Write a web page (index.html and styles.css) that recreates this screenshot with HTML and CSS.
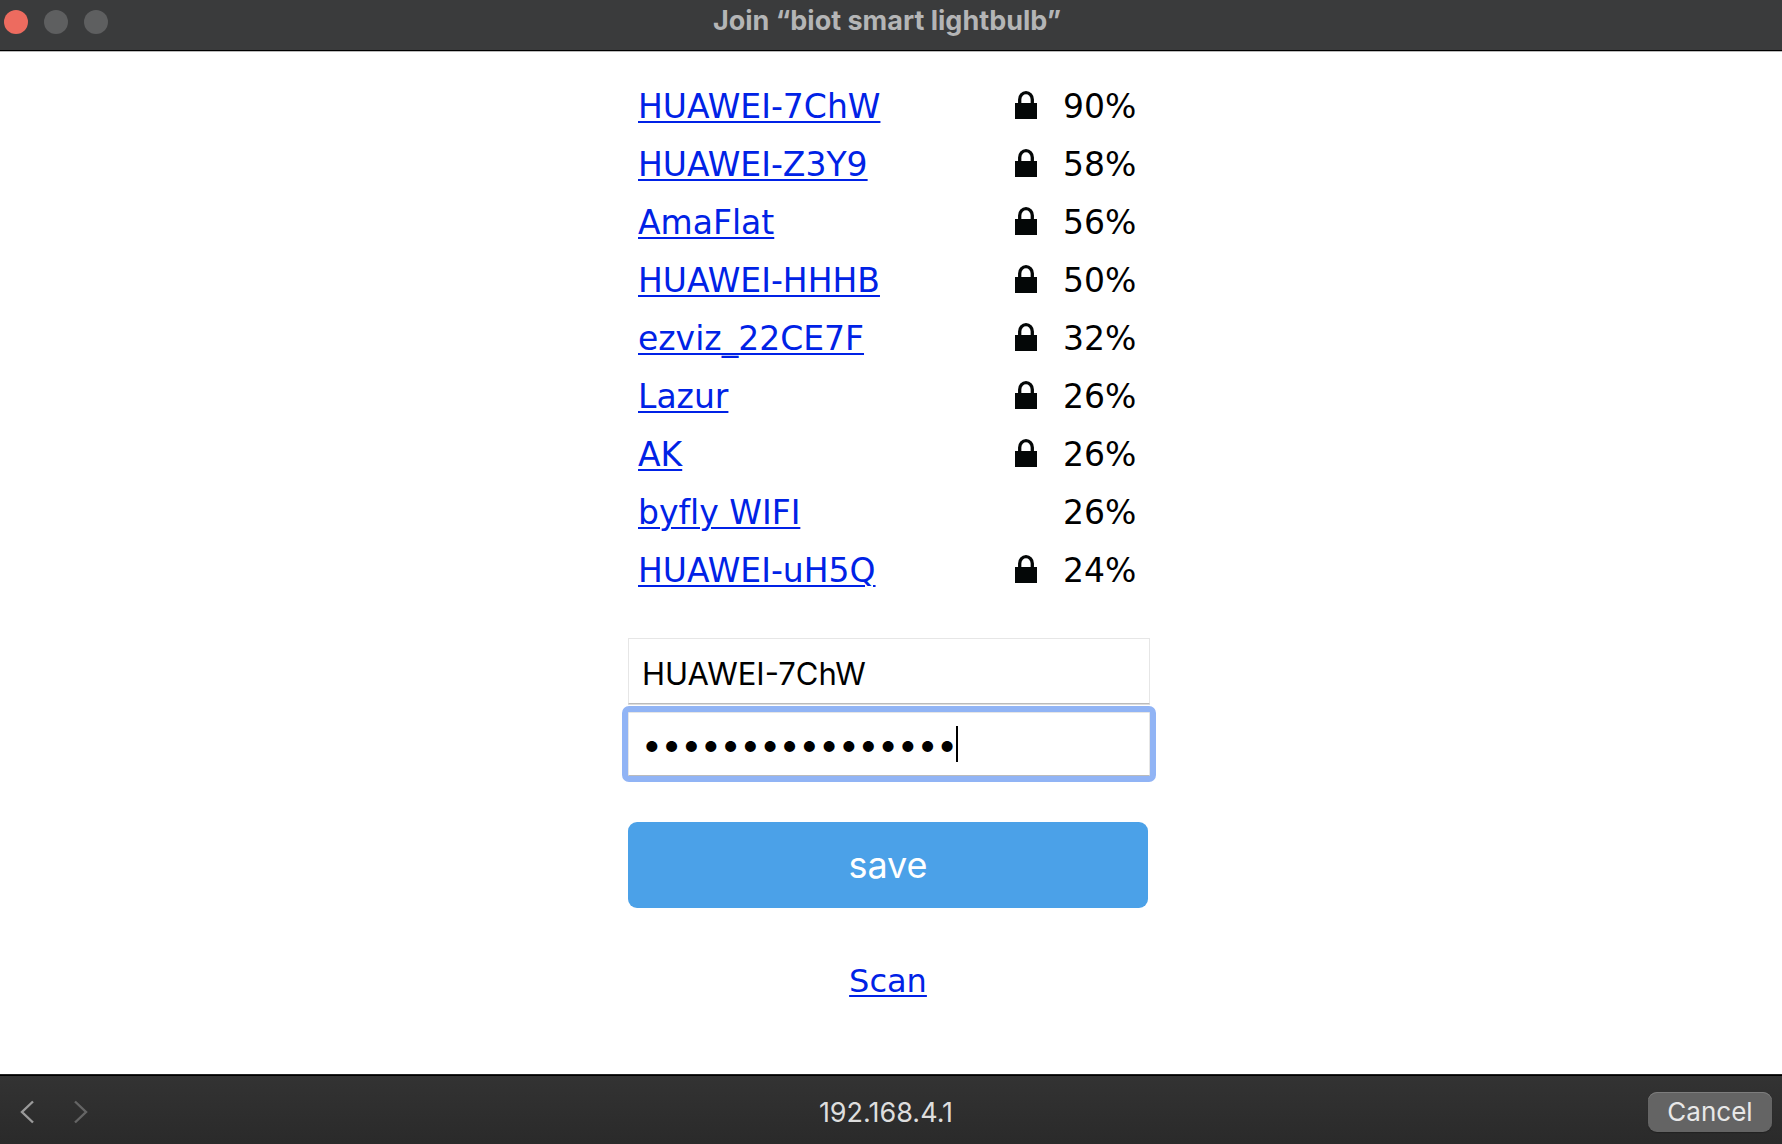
FILE: index.html
```html
<!DOCTYPE html>
<html lang="en">
<head>
<meta charset="utf-8">
<title>Join “biot smart lightbulb”</title>
<link rel="stylesheet" href="styles.css">
</head>
<body>
<svg width="0" height="0" class="defs" aria-hidden="true">
  <symbol id="lock" viewBox="0 0 22 28">
    <path d="M0 12h22v16H0z" fill="#040707"/>
    <path d="M4.700 13V8.500a6.300 6.800 0 0 1 12.600 0V13" fill="none" stroke="#040707" stroke-width="3.300"/>
  </symbol>
</svg>
<header class="titlebar">
  <div class="lights"><button class="light light-close" aria-label="Close"></button><button class="light" aria-label="Minimize" disabled></button><button class="light" aria-label="Zoom" disabled></button></div>
  <h1 class="title">Join “biot smart lightbulb”</h1>
</header>
<main class="content">
  <div class="panel">
    <table class="networks">
      <tbody>
        <tr><td><a href="#c">HUAWEI-7ChW</a></td><td class="security"><svg class="lock"><use href="#lock"/></svg></td><td class="signal">90%</td></tr>
        <tr><td><a href="#c">HUAWEI-Z3Y9</a></td><td class="security"><svg class="lock"><use href="#lock"/></svg></td><td class="signal">58%</td></tr>
        <tr><td><a href="#c">AmaFlat</a></td><td class="security"><svg class="lock"><use href="#lock"/></svg></td><td class="signal">56%</td></tr>
        <tr><td><a href="#c">HUAWEI-HHHB</a></td><td class="security"><svg class="lock"><use href="#lock"/></svg></td><td class="signal">50%</td></tr>
        <tr><td><a href="#c">ezviz_22CE7F</a></td><td class="security"><svg class="lock"><use href="#lock"/></svg></td><td class="signal">32%</td></tr>
        <tr><td><a href="#c">Lazur</a></td><td class="security"><svg class="lock"><use href="#lock"/></svg></td><td class="signal">26%</td></tr>
        <tr><td><a href="#c">AK</a></td><td class="security"><svg class="lock"><use href="#lock"/></svg></td><td class="signal">26%</td></tr>
        <tr><td><a href="#c">byfly WIFI</a></td><td class="security"></td><td class="signal">26%</td></tr>
        <tr><td><a href="#c">HUAWEI-uH5Q</a></td><td class="security"><svg class="lock"><use href="#lock"/></svg></td><td class="signal">24%</td></tr>
      </tbody>
    </table>
    <form class="credentials" id="c">
      <input class="field" type="text" name="s" aria-label="SSID" value="HUAWEI-7ChW">
      <div class="password">
        <input class="field field-active" type="password" name="p" aria-label="Password" value="abcdefgh12345678">
        <span class="caret"></span>
      </div>
      <button class="save" type="submit">save</button>
    </form>
    <div class="scan"><a href="#scan">Scan</a></div>
  </div>
</main>
<footer class="toolbar">
  <div class="nav">
    <button class="nav-button" aria-label="Back"><svg width="14" height="24" viewBox="0 0 14 24"><path d="M13 1.500 2 12l11 10.500" fill="none" stroke="#9a9a9a" stroke-width="2.400"/></svg></button>
    <button class="nav-button" aria-label="Forward" disabled><svg width="14" height="24" viewBox="0 0 14 24"><path d="M1 1.500 12 12 1 22.500" fill="none" stroke="#656565" stroke-width="2.400"/></svg></button>
  </div>
  <span class="address">192.168.4.1</span>
  <div class="actions"><button class="cancel">Cancel</button></div>
</footer>
</body>
</html>
```
FILE: styles.css
```css
* {
  box-sizing: border-box;
}

body {
  margin: 0;
  min-height: 100vh;
  display: flex;
  flex-direction: column;
  background: #fff;
  color: #000;
  font: 32px/58px "DejaVu Sans", Verdana, sans-serif;
  font-variant-ligatures: none;
}

a {
  color: #0022e6;
  text-decoration-thickness: 2px;
  text-underline-offset: 3px;
}

button {
  padding: 0;
  border: 0;
  background: none;
}

.defs {
  position: absolute;
}

.titlebar,
.toolbar {
  display: grid;
  grid-template-columns: 1fr auto 1fr;
  align-items: center;
  font-family: Inter, sans-serif;
}

.titlebar {
  height: 52px;
  padding: 0 12px 8px 4px;
  background: #3a3b3c;
  border-bottom: 1px solid #bbb;
  box-shadow: inset 0 -1px #000;
}

.lights {
  display: flex;
  gap: 16px;
}

.light {
  width: 24px;
  height: 24px;
  border-radius: 50%;
  background: #5e5f60;
}

.light-close {
  background: #ed6b5f;
}

.title {
  margin: 0;
  padding-bottom: 2px;
  font-size: 27px;
  line-height: 32px;
  font-weight: 700;
  color: #b4b5b6;
}

.content {
  flex: 1;
  display: flex;
  justify-content: center;
  padding: 26px 4px 0 0;
}

.panel {
  width: 522px;
}

.networks {
  width: 100%;
  border-collapse: collapse;
  font-size: 33px;
}

.networks td {
  height: 58px;
  padding: 0 0 0 10px;
}

.networks .security {
  width: 32px;
  padding-bottom: 4px;
}

.networks .signal {
  width: 113px;
  padding-left: 26px;
}

.lock {
  display: block;
  width: 22px;
  height: 28px;
}

.credentials {
  display: flex;
  flex-direction: column;
  gap: 8px;
  margin-top: 38px;
}

.field {
  display: block;
  width: 100%;
  height: 66px;
  padding: 4px 13px 0;
  border: 1px solid #e6e6e6;
  border-bottom: 1px solid #bbb;
  background: #fff;
  color: #000;
  font: 31px Inter, sans-serif;
  box-shadow: 0 1px #ddd;
}

.password {
  position: relative;
}

.field-active {
  height: 64px;
  padding-top: 0;
  outline: 6px solid #91b4f5;
  border-radius: 1px;
  font-size: 35px;
}

.caret {
  position: absolute;
  left: 328px;
  top: 14px;
  width: 2px;
  height: 36px;
  background: #000;
}

.save {
  height: 86px;
  margin: 38px 2px 0 0;
  border-radius: 9px;
  background: #4ba1e8;
  color: #fff;
  font: 36px Inter, sans-serif;
}

.scan {
  margin-top: 44px;
  padding-right: 2px;
  text-align: center;
}

.toolbar {
  height: 70px;
  padding: 4px 10px 0 0;
  border-top: 1px solid #222;
  background: linear-gradient(#333, #2a2a2a);
  box-shadow: inset 0 1px #000;
  font-size: 27px;
  line-height: 32px;
  color: #dedede;
}

.nav {
  display: flex;
  gap: 26px;
  padding-left: 13px;
}

.nav-button {
  display: flex;
  justify-content: center;
  width: 28px;
}

.address {
  padding-top: 2px;
}

.cancel {
  display: block;
  width: 124px;
  height: 40px;
  margin-left: auto;
  border-radius: 9px;
  background: #646464;
  box-shadow: inset 0 1px #7d7d7d, 0 1px 1px #222;
  color: #e8e8e8;
  font: 26px Inter, sans-serif;
}
```
